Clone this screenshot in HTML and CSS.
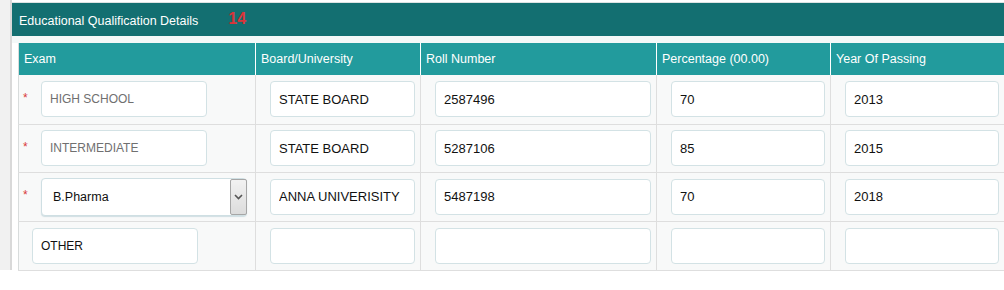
FILE: index.html
```html
<!DOCTYPE html>
<html lang="en">
<head>
<meta charset="utf-8">
<title>Educational Qualification Details</title>
<link rel="stylesheet" href="styles.css">
</head>
<body>
<div class="page">
  <div class="side"></div>
  <div class="main">
    <div class="remnant"></div>
    <div class="panel-head">
      <span class="panel-title">Educational Qualification Details</span>
      <span class="count">14</span>
    </div>
    <div class="panel-body">
      <table class="grid">
        <colgroup>
          <col class="c1"><col class="c2"><col class="c3"><col class="c4"><col class="c5">
        </colgroup>
        <thead>
          <tr>
            <th>Exam</th>
            <th>Board/University</th>
            <th>Roll Number</th>
            <th>Percentage (00.00)</th>
            <th>Year Of Passing</th>
          </tr>
        </thead>
        <tbody>
          <tr class="r1">
            <td class="exam"><div class="exam-cell"><span class="req">*</span><input class="fld exam-fld muted" value="HIGH SCHOOL" readonly></div></td>
            <td><input class="fld" value="STATE BOARD"></td>
            <td><input class="fld" value="2587496"></td>
            <td><input class="fld" value="70"></td>
            <td><input class="fld" value="2013"></td>
          </tr>
          <tr class="r2">
            <td class="exam"><div class="exam-cell"><span class="req">*</span><input class="fld exam-fld muted" value="INTERMEDIATE" readonly></div></td>
            <td><input class="fld" value="STATE BOARD"></td>
            <td><input class="fld" value="5287106"></td>
            <td><input class="fld" value="85"></td>
            <td><input class="fld" value="2015"></td>
          </tr>
          <tr class="r3">
            <td class="exam"><div class="exam-cell"><span class="req">*</span><div class="sel-wrap"><select class="sel"><option>B.Pharma</option></select><span class="sel-btn"><svg width="9" height="6" viewBox="0 0 9 6"><path d="M1 1 L4.5 4.5 L8 1" fill="none" stroke="#555" stroke-width="1.6"/></svg></span></div></div></td>
            <td><input class="fld" value="ANNA UNIVERISITY"></td>
            <td><input class="fld" value="5487198"></td>
            <td><input class="fld" value="70"></td>
            <td><input class="fld" value="2018"></td>
          </tr>
          <tr class="r4">
            <td class="exam other"><div class="exam-cell"><input class="fld exam-fld" value="OTHER"></div></td>
            <td><input class="fld" value=""></td>
            <td><input class="fld" value=""></td>
            <td><input class="fld" value=""></td>
            <td><input class="fld" value=""></td>
          </tr>
        </tbody>
      </table>
    </div>
  </div>
</div>
</body>
</html>
```
FILE: styles.css
```css
html, body {
  margin: 0;
  padding: 0;
  background: #ffffff;
  font-family: "Liberation Sans", Arial, sans-serif;
}

.page {
  display: flex;
  align-items: flex-start;
  width: 1004px;
  height: 290px;
  overflow: hidden;
}

.side {
  width: 10px;
  height: 270px;
  flex: none;
  background: #f1f1f1;
  border-right: 2px solid #d9d9d9;
}

.main {
  flex: 1;
  min-width: 0;
}

.remnant {
  height: 2px;
  border-bottom: 1px solid #dde3e3;
  background: #ffffff;
}

.panel-head {
  height: 33px;
  background: #136f71;
  display: flex;
  align-items: center;
  padding: 2px 0 0 7px;
  box-sizing: border-box;
}

.panel-title {
  color: #ffffff;
  font-size: 12.5px;
}

.count {
  color: #d9353a;
  font-weight: bold;
  font-size: 16px;
  margin-left: 30px;
  margin-top: -4px;
}

.panel-body {
  background: #ffffff;
  border-top: 7px solid #f3f8f8;
  padding: 0 0 0 6px;
}

.grid {
  border-collapse: collapse;
  table-layout: fixed;
  width: 986px;
  border-left: 1px solid #d8dcdc;
}

.c1 { width: 237px; }
.c2 { width: 165px; }
.c3 { width: 236px; }
.c4 { width: 174px; }
.c5 { width: 174px; }

.grid th {
  background: #229b9d;
  color: #ffffff;
  font-weight: normal;
  font-size: 12.5px;
  text-align: left;
  height: 32px;
  padding: 0 0 0 5px;
  border-right: 1px solid #ffffff;
  box-sizing: border-box;
}

.grid td {
  background: #f8f9f9;
  border-bottom: 1px solid #dedede;
  border-right: 1px solid #dedede;
  padding: 0 5px 0 14px;
  box-sizing: border-box;
}

.r1 td { height: 49px; }
.r2 td { height: 48px; }
.r3 td { height: 49px; }
.r4 td { height: 49px; }

.grid td.exam {
  padding: 0 0 0 4px;
}

.grid td.other {
  padding-left: 13px;
}

.exam-cell {
  display: flex;
  align-items: center;
}

.req {
  flex: none;
  width: 6px;
  margin-right: 12px;
  color: #d83a3a;
  font-size: 12px;
  line-height: 12px;
  margin-top: -3px;
}

.fld {
  display: block;
  width: 100%;
  height: 36px;
  box-sizing: border-box;
  border: 1px solid #d3e2e5;
  border-radius: 4px;
  background: #ffffff;
  padding: 0 0 0 8px;
  font-family: "Liberation Sans", Arial, sans-serif;
  font-size: 13px;
  color: #111111;
  outline: none;
}

.exam-fld {
  width: 166px;
  font-size: 12px;
}

.muted {
  color: #707070;
}

.sel-wrap {
  position: relative;
  width: 206px;
  height: 38px;
}

.sel {
  -webkit-appearance: none;
  appearance: none;
  display: block;
  width: 100%;
  height: 100%;
  box-sizing: border-box;
  border: 1px solid #cfdfe3;
  border-radius: 4px;
  background: #ffffff;
  padding: 0 0 0 11px;
  font-family: "Liberation Sans", Arial, sans-serif;
  font-size: 12.5px;
  color: #111111;
  box-shadow: 0 1px 1px rgba(160, 190, 200, 0.45);
}

.sel-btn {
  position: absolute;
  top: 1px;
  right: 0;
  width: 17px;
  height: 36px;
  box-sizing: border-box;
  border: 1px solid #a6a6a6;
  border-radius: 2px;
  background: linear-gradient(#f2f2f2, #dcdcdc);
  display: flex;
  align-items: center;
  justify-content: center;
}
```
